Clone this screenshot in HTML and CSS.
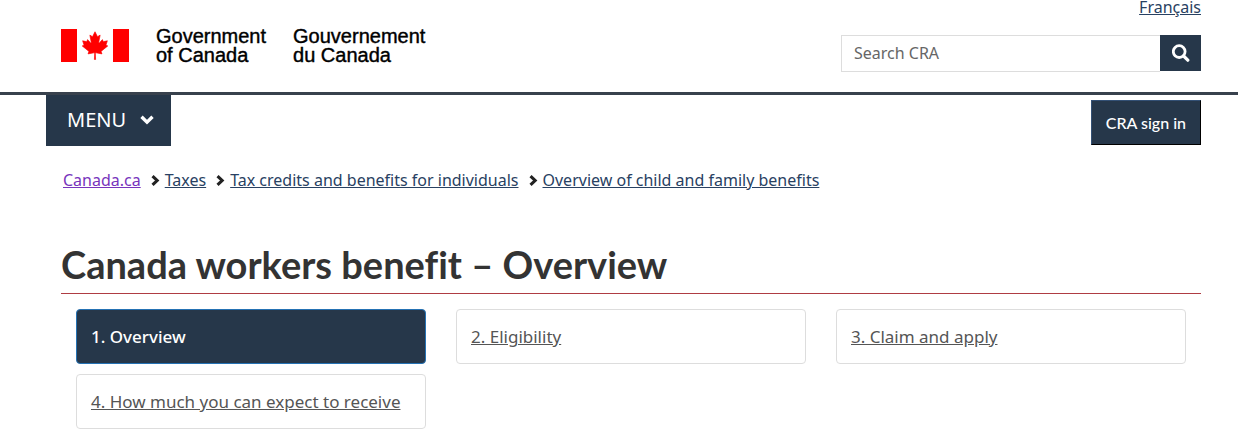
FILE: index.html
```html
<!DOCTYPE html>
<html lang="en">
<head>
<meta charset="utf-8">
<meta name="viewport" content="width=device-width, initial-scale=1">
<title>Canada workers benefit – Overview</title>
<link rel="stylesheet" href="styles.css">
</head>
<body>
<header class="site-header">
  <div class="container brand-bar">
    <div class="brand">
      <svg class="flag" viewBox="0 0 9900 4800" preserveAspectRatio="none" aria-hidden="true">
        <path fill="#f00" d="M0 0h2330v4800H0zM7570 0H9900v4800H7570z"/>
        <path fill="#f00" stroke="#f00" stroke-width="90" transform="translate(150 0)" d="m4890 4430-45-863a95 95 0 0 1 111-98l859 151-116-320a65 65 0 0 1 20-73l941-762-212-99a65 65 0 0 1-34-79l186-572-542 115a65 65 0 0 1-73-38l-105-247-423 454a65 65 0 0 1-111-57l204-1052-327 189a65 65 0 0 1-91-27l-332-652-332 652a65 65 0 0 1-91 27l-327-189 204 1052a65 65 0 0 1-111 57l-423-454-105 247a65 65 0 0 1-73 38l-542-115 186 572a65 65 0 0 1-34 79l-212 99 941 762a65 65 0 0 1 20 73l-116 320 859-151a95 95 0 0 1 111 98l-45 863z"/>
      </svg>
      <span class="wordmark">Government<br>of Canada</span>
      <span class="wordmark" lang="fr">Gouvernement<br>du Canada</span>
    </div>
    <div class="tools">
      <a class="language" href="#" lang="fr">Français</a>
      <form class="search" role="search">
        <input class="search-input" type="search" placeholder="Search CRA" aria-label="Search CRA">
        <button class="search-button" type="submit" aria-label="Search">
          <svg width="18" height="18" viewBox="0 0 18 18" fill="none" stroke="#fff" aria-hidden="true"><circle cx="7.2" cy="7.6" r="5.9" stroke-width="2.8"/><path d="m11.6 12 4.2 4.2" stroke-width="3.2" stroke-linecap="round"/></svg>
        </button>
      </form>
    </div>
  </div>
</header>
<div class="container menu-bar">
  <button class="menu-button" type="button">MENU
    <svg width="14" height="10" viewBox="0 0 14 10" fill="none" stroke="#fff" stroke-width="3.4" aria-hidden="true"><path d="m1.5 1.8 5.5 5.3 5.5-5.3"/></svg>
  </button>
  <button class="sign-in" type="button">CRA sign in</button>
</div>
<nav class="container" aria-label="Breadcrumb">
  <ol class="breadcrumb">
    <li><a class="visited" href="#">Canada.ca</a></li>
    <li><svg class="chevron" viewBox="0 0 8 10" aria-hidden="true"><path d="m1.3 1 4.2 4-4.2 4"/></svg><a href="#">Taxes</a></li>
    <li><svg class="chevron" viewBox="0 0 8 10" aria-hidden="true"><path d="m1.3 1 4.2 4-4.2 4"/></svg><a href="#">Tax credits and benefits for individuals</a></li>
    <li><svg class="chevron" viewBox="0 0 8 10" aria-hidden="true"><path d="m1.3 1 4.2 4-4.2 4"/></svg><a href="#">Overview of child and family benefits</a></li>
  </ol>
</nav>
<main class="container">
  <h1 class="title">Canada workers benefit – Overview</h1>
  <nav class="steps" aria-label="Sections">
    <a class="step active" href="#" aria-current="page">1. Overview</a>
    <a class="step" href="#">2. Eligibility</a>
    <a class="step" href="#">3. Claim and apply</a>
    <a class="step" href="#">4. How much you can expect to receive</a>
  </nav>
</main>
</body>
</html>
```

FILE: styles.css
```css
* {
  box-sizing: border-box;
}

body {
  margin: 0;
  background: #fff;
  color: #333;
  font: 16px/24px "Noto Sans", sans-serif;
}

a {
  color: #284162;
}

button,
input {
  font: inherit;
}

.container {
  padding: 0 37px 0 61px;
}

.site-header {
  border-bottom: 3px solid #38414d;
}

.brand-bar {
  display: flex;
  justify-content: space-between;
  padding-bottom: 20px;
}

.brand {
  display: flex;
  align-items: flex-start;
  gap: 27px;
  padding-top: 27px;
}

.flag {
  width: 68px;
  height: 33px;
  margin-top: 2px;
}

.wordmark {
  color: #000;
  font: 20px/19px "Liberation Sans", Arial, sans-serif;
  -webkit-text-stroke: 0.4px #000;
}

.tools {
  display: flex;
  flex-direction: column;
  align-items: flex-end;
  gap: 20px;
  width: 360px;
}

.language {
  line-height: 15px;
}

.search {
  display: flex;
  width: 100%;
}

.search-input {
  flex: 1;
  min-width: 0;
  height: 37px;
  padding: 0 12px 2px;
  border: 1px solid #ddd;
  border-right: 0;
  border-radius: 0;
  background: #fff;
}

.search-input::placeholder {
  color: #666;
  opacity: 1;
}

.search-button {
  display: flex;
  align-items: center;
  justify-content: center;
  width: 41px;
  height: 36px;
  padding: 0;
  border: 0;
  background: #26374a;
}

.menu-bar {
  display: flex;
  justify-content: space-between;
  align-items: flex-start;
  padding-left: 46px;
}

.menu-button {
  display: flex;
  align-items: center;
  gap: 14px;
  height: 51px;
  padding: 0 17px 2px 21px;
  border: 0;
  background: #26374a;
  color: #fff;
  font-size: 20px;
}

.sign-in {
  height: 45px;
  margin-top: 5px;
  padding: 0 14px;
  border: 1px solid;
  border-color: #335075 #000 #000 #335075;
  background: #26374a;
  color: #fff;
  font-family: Lato, sans-serif;
  font-weight: 500;
}

.breadcrumb {
  display: flex;
  flex-wrap: wrap;
  gap: 10px;
  margin: 22px 0 0;
  padding: 0 2px;
  list-style: none;
}

.breadcrumb li {
  display: flex;
  align-items: center;
}

.breadcrumb .visited {
  color: #7834bc;
}

.chevron {
  width: 9px;
  height: 11px;
  margin-right: 5px;
  fill: none;
  stroke: #222;
  stroke-width: 2.8;
}

.title {
  margin: 48px 0 15px;
  padding-bottom: 5px;
  border-bottom: 1px solid #af3c43;
  font: 700 38px/48px Lato, sans-serif;
  font-variant-ligatures: none;
}

.steps {
  display: grid;
  grid-template-columns: repeat(3, 1fr);
  gap: 10px 30px;
  padding: 0 15px;
}

.step {
  padding: 15px 14px;
  border: 1px solid #ddd;
  border-radius: 4px;
  color: #555;
  font-size: 17px;
  line-height: 23px;
}

.step.active {
  border-color: #2572b4;
  background: #26374a;
  color: #fff;
  font-weight: 500;
  text-decoration: none;
}
```
